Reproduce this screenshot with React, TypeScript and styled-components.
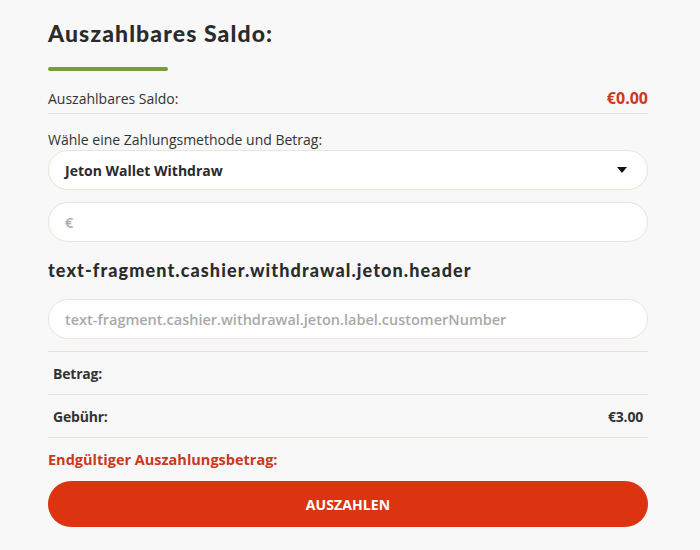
import React from "react";
import styled, { createGlobalStyle } from "styled-components";

const Global = createGlobalStyle`
  html, body { margin: 0; padding: 0; background: #f8f8f8; }
  body { font-family: "Open Sans", "Liberation Sans", sans-serif; color: #333; }
  * { box-sizing: border-box; }
`;

const Page = styled.div`
  width: 700px;
  min-height: 550px;
  padding: 18px 52px 0 48px;
  display: flex;
  flex-direction: column;
`;

const Title = styled.h1`
  margin: 0;
  font-family: "Lato", "Open Sans", sans-serif;
  font-weight: 900;
  font-size: 23px;
  line-height: 30px;
  color: #2b2b2b;
  letter-spacing: 1.1px;
`;

const Accent = styled.div`
  width: 120px;
  height: 4px;
  border-radius: 2px;
  background: #7b9c3a;
  margin-top: 19px;
`;

const BalanceRow = styled.div`
  display: flex;
  justify-content: space-between;
  align-items: center;
  margin-top: 16px;
  padding-bottom: 4px;
  border-bottom: 1px solid #e9e3d5;
  height: 27px;
  font-size: 14px;
  color: #333;
`;

const Red = styled.span`
  color: #c9391a;
  font-weight: 700;
  font-size: 16px;
`;

const Label = styled.div`
  margin-top: 17px;
  font-size: 14px;
  line-height: 18px;
  color: #333;
`;

const Field = styled.div<{ $gap?: number }>`
  margin-top: ${(p) => p.$gap ?? 0}px;
  height: 40px;
  border-radius: 20px;
  background: #fff;
  border: 1px solid #ebe5d7;
  display: flex;
  align-items: center;
  justify-content: space-between;
  padding: 0 20px 0 16px;
  font-size: 14px;
`;

const SelectText = styled.span`
  font-weight: 700;
  color: #2a2a2a;
`;

const Placeholder = styled.span`
  color: #a9a9a9;
  font-weight: 600;
  font-size: 14.5px;
`;

const Caret = styled.span`
  width: 0;
  height: 0;
  border-left: 5px solid transparent;
  border-right: 5px solid transparent;
  border-top: 6px solid #111;
`;

const SubHeader = styled.h2`
  margin: 16px 0 0;
  font-family: "Lato", "Open Sans", sans-serif;
  font-weight: 900;
  font-size: 18px;
  line-height: 24px;
  color: #2b2b2b;
  letter-spacing: 1.1px;
`;

const Summary = styled.div`
  margin-top: 12px;
  border-top: 1px solid #e9e3d5;
  display: flex;
  flex-direction: column;
`;

const SumRow = styled.div`
  height: 43px;
  border-bottom: 1px solid #e9e3d5;
  display: flex;
  align-items: center;
  justify-content: space-between;
  padding: 0 5px;
  font-size: 14px;
  font-weight: 700;
  color: #333;
  letter-spacing: -0.2px;
`;

const Final = styled.div`
  height: 43px;
  display: flex;
  align-items: center;
  color: #c9391a;
  font-weight: 700;
  font-size: 14.5px;
  letter-spacing: 0;
`;

const Button = styled.button`
  height: 46px;
  border: none;
  border-radius: 23px;
  background: #dc3410;
  color: #fff;
  font-family: "Open Sans", sans-serif;
  font-weight: 700;
  font-size: 14px;
  letter-spacing: 0.1px;
`;

export default function App() {
  return (
    <>
      <Global />
      <Page>
        <Title>Auszahlbares Saldo:</Title>
        <Accent />
        <BalanceRow>
          <span>Auszahlbares Saldo:</span>
          <Red>€0.00</Red>
        </BalanceRow>
        <Label>Wähle eine Zahlungsmethode und Betrag:</Label>
        <Field $gap={1}>
          <SelectText>Jeton Wallet Withdraw</SelectText>
          <Caret />
        </Field>
        <Field $gap={12}>
          <Placeholder>€</Placeholder>
        </Field>
        <SubHeader>text-fragment.cashier.withdrawal.jeton.header</SubHeader>
        <Field $gap={17}>
          <Placeholder>text-fragment.cashier.withdrawal.jeton.label.customerNumber</Placeholder>
        </Field>
        <Summary>
          <SumRow>
            <span>Betrag:</span>
          </SumRow>
          <SumRow>
            <span>Gebühr:</span>
            <span>€3.00</span>
          </SumRow>
          <Final>Endgültiger Auszahlungsbetrag:</Final>
        </Summary>
        <Button>AUSZAHLEN</Button>
      </Page>
    </>
  );
}
